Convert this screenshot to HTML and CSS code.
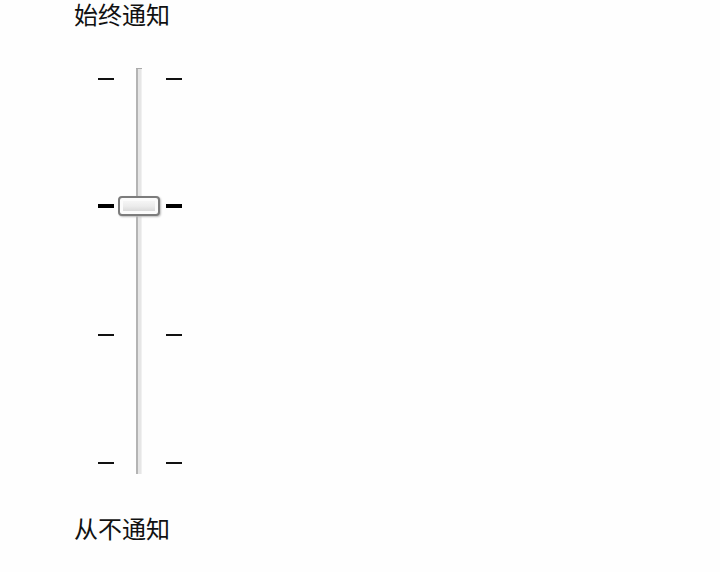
FILE: index.html
```html
<!DOCTYPE html>
<html lang="zh-CN">
<head>
<meta charset="utf-8">
<meta name="viewport" content="width=device-width, initial-scale=1">
<title>通知</title>
<link rel="stylesheet" href="styles.css">
</head>
<body>
<main class="notify">
  <label class="caption" for="level">始终通知</label>
  <div class="scale">
    <div class="ticks" aria-hidden="true">
      <span class="tick"></span>
      <span class="tick tick-current"></span>
      <span class="tick"></span>
      <span class="tick"></span>
    </div>
    <div class="rail">
      <input class="slider" id="level" type="range" min="0" max="3" step="1" value="2">
    </div>
    <div class="ticks" aria-hidden="true">
      <span class="tick"></span>
      <span class="tick tick-current"></span>
      <span class="tick"></span>
      <span class="tick"></span>
    </div>
  </div>
  <label class="caption" for="level">从不通知</label>
</main>
</body>
</html>
```
FILE: styles.css
```css
* {
  box-sizing: border-box;
}

body {
  margin: 0;
  background: #fefefe;
  color: #111;
  font-family: "Noto Sans CJK SC", sans-serif;
}

.notify {
  display: flex;
  flex-direction: column;
  align-items: flex-start;
  padding-left: 74px;
}

.caption {
  font-size: 24px;
  line-height: 28px;
}

.scale {
  display: flex;
  margin: 40px 0 40px 24px;
}

.ticks {
  display: flex;
  flex-direction: column;
  gap: 124px;
  padding-top: 8px;
}

.tick {
  width: 16px;
  height: 4px;
  border-bottom: 2px solid #111;
}

.tick-current {
  border-bottom: 4px solid #000;
}

/* The groove runs slightly past the slider's last stop. */
.rail {
  width: 42px;
  height: 406px;
  margin: 0 6px 0 4px;
  background:
    linear-gradient(#aaa, #aaa) center top / 6px 1px no-repeat,
    linear-gradient(to right, #b4b4b4 0 2px, #e6e6e6 2px 5px, #f0f0f0 5px) center / 6px 100% no-repeat;
}

.slider {
  display: block;
  width: 42px;
  height: 404px;
  margin: 0;
  appearance: none;
  background: transparent;
  writing-mode: vertical-lr;
  direction: rtl;
}

.slider::-webkit-slider-thumb {
  appearance: none;
  width: 42px;
  height: 20px;
  border: 2px solid #7c7c7c;
  border-radius: 4px;
  background: linear-gradient(#f5f5f5, #ececec 50%, #dadada) center / 32px 10px no-repeat #fbfbfb;
  box-shadow: 1px 1px 2px #bbb;
}
```
